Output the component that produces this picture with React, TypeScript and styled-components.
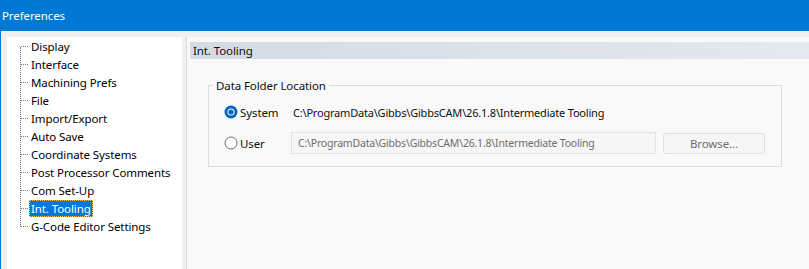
import styled, { createGlobalStyle } from 'styled-components';

const GlobalStyle = createGlobalStyle`
  html, body {
    margin: 0;
    padding: 0;
    background: #f0f0f0;
  }
  body {
    font-family: 'Noto Sans', 'Liberation Sans', sans-serif;
    font-size: 11.5px;
    letter-spacing: -0.1px;
    color: #000;
  }
`;

const treeItems = [
  'Display',
  'Interface',
  'Machining Prefs',
  'File',
  'Import/Export',
  'Auto Save',
  'Coordinate Systems',
  'Post Processor Comments',
  'Com Set-Up',
  'Int. Tooling',
  'G-Code Editor Settings',
];

const toolingPath = 'C:\\ProgramData\\Gibbs\\GibbsCAM\\26.1.8\\Intermediate Tooling';

function RadioIcon({ checked }: { checked: boolean }) {
  if (checked) {
    return (
      <svg width="14" height="14" viewBox="0 0 14 14">
        <circle cx="7" cy="7" r="6.5" fill="#0067c0" />
        <circle cx="7" cy="7" r="3.6" fill="#ffffff" />
        <circle cx="7" cy="7" r="2.6" fill="#0067c0" />
      </svg>
    );
  }
  return (
    <svg width="14" height="14" viewBox="0 0 14 14">
      <circle cx="7" cy="7" r="6" fill="#ffffff" stroke="#6e6e6e" strokeWidth="1" />
    </svg>
  );
}

export default function App() {
  return (
    <>
      <GlobalStyle />
      <Window>
        <TitleBar>Preferences</TitleBar>
        <Body>
          <TreePanel>
            <TreeList>
              {treeItems.map((item) => (
                <TreeItem key={item}>
                  <TreeLabel $selected={item === 'Int. Tooling'}>{item}</TreeLabel>
                </TreeItem>
              ))}
            </TreeList>
          </TreePanel>

          <ContentPanel>
            <PageHeader>Int. Tooling</PageHeader>
            <GroupBox>
              <Legend>Data Folder Location</Legend>
              <OptionRow>
                <RadioIcon checked />
                <OptionLabel>System</OptionLabel>
                <PathText>{toolingPath}</PathText>
              </OptionRow>
              <OptionRow>
                <RadioIcon checked={false} />
                <OptionLabel>User</OptionLabel>
                <PathInput>{toolingPath}</PathInput>
                <BrowseButton>Browse...</BrowseButton>
              </OptionRow>
            </GroupBox>
          </ContentPanel>
        </Body>
      </Window>
    </>
  );
}

const Window = styled.div`
  width: 809px;
  height: 269px;
  display: flex;
  flex-direction: column;
  border-left: 1px solid #0078d4;
  box-sizing: border-box;
  background: #f0f0f0;
  overflow: hidden;
`;

const TitleBar = styled.div`
  height: 31px;
  flex-shrink: 0;
  background: #0078d4;
  color: #ffffff;
  font-size: 11.5px;
  display: flex;
  align-items: center;
  padding-left: 1px;
`;

const Body = styled.div`
  flex: 1;
  display: flex;
  padding: 6px 0 0 6px;
  gap: 4px;
`;

const TreePanel = styled.div`
  width: 175px;
  background: #ffffff;
  padding: 0 0 0 13px;
  box-sizing: border-box;
`;

const TreeList = styled.div`
  position: relative;
  padding-left: 9px;

  &::before {
    content: '';
    position: absolute;
    left: 0;
    top: 10px;
    bottom: 8px;
    border-left: 1px dotted #7a7a7a;
  }
`;

const TreeItem = styled.div`
  position: relative;
  height: 18px;
  display: flex;
  align-items: center;

  &::before {
    content: '';
    position: absolute;
    left: -8px;
    top: 9px;
    width: 7px;
    border-top: 1px dotted #7a7a7a;
  }
`;

const TreeLabel = styled.span<{ $selected?: boolean }>`
  padding: 0 2px;
  line-height: 17px;
  white-space: nowrap;
  color: ${(p) => (p.$selected ? '#ffffff' : '#000000')};
  background: ${(p) => (p.$selected ? '#0078d7' : 'transparent')};
  outline: ${(p) => (p.$selected ? '1px dotted #f5c46b' : 'none')};
  outline-offset: -1px;
`;

const ContentPanel = styled.div`
  flex: 1;
  background: #f9f9f9;
  border-left: 1px solid #dadada;
  padding: 5px 0 0 3px;
`;

const PageHeader = styled.div`
  height: 17px;
  line-height: 17px;
  padding-left: 3px;
  background: linear-gradient(to right, #d3dbe4, #e6e9ed);
  color: #101010;
`;

const GroupBox = styled.fieldset`
  margin: 19px 27px 0 18px;
  padding: 8px 0 12px 0;
  border: 1px solid #dcdcdc;
  display: flex;
  flex-direction: column;
  gap: 9px;
`;

const Legend = styled.legend`
  padding: 0 3px;
  margin-left: 4px;
  color: #101010;
`;

const OptionRow = styled.div`
  height: 22px;
  padding-left: 15px;
  display: flex;
  align-items: center;
`;

const OptionLabel = styled.span`
  width: 51px;
  padding-left: 2px;
  color: #101010;
`;

const PathText = styled.span`
  padding-left: 2px;
  font-size: 11px;
  letter-spacing: -0.2px;
  color: #101010;
`;

const PathInput = styled.div`
  width: 357px;
  height: 20px;
  line-height: 20px;
  padding-left: 6px;
  border: 1px solid #e3e3e3;
  background: #f6f6f6;
  color: #6d6d6d;
  font-size: 10.5px;
  letter-spacing: -0.2px;
  white-space: nowrap;
  overflow: hidden;
`;

const BrowseButton = styled.div`
  margin-left: 7px;
  width: 100px;
  height: 19px;
  line-height: 19px;
  text-align: center;
  border: 1px solid #e0e0e0;
  border-radius: 3px;
  background: #f6f6f6;
  color: #6d6d6d;
`;
